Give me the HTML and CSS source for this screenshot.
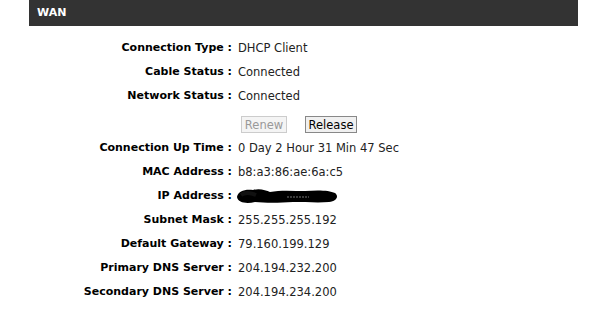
FILE: index.html
```html
<!DOCTYPE html>
<html lang="en">
<head>
    <meta charset="UTF-8">
    <title>WAN</title>
    <link rel="stylesheet" href="styles.css">
</head>
<body>
    <div class="panel">
        <div class="title">WAN</div>
        <div class="info">
            <div class="label">Connection Type :</div>
            <div class="value">DHCP Client</div>

            <div class="label">Cable Status :</div>
            <div class="value">Connected</div>

            <div class="label">Network Status :</div>
            <div class="value">Connected</div>

            <div class="label btn-row"></div>
            <div class="value buttons">
                <button type="button" class="renew" disabled>Renew</button>
                <button type="button" class="release">Release</button>
            </div>

            <div class="label">Connection Up Time :</div>
            <div class="value">0 Day 2 Hour 31 Min 47 Sec</div>

            <div class="label">MAC Address :</div>
            <div class="value">b8:a3:86:ae:6a:c5</div>

            <div class="label">IP Address :</div>
            <div class="value">
                <!-- scribbled out -->
                <svg class="scribble" width="104" height="16" viewBox="0 0 104 16">
                    <path d="M2 9 C3 3 10 1 18 2 C24 0 31 2 35 4 C45 2 58 3 70 3 C82 2 94 2 100 5 C104 8 102 13 94 14 C84 15 70 14 58 14 C44 15 30 15 20 14 C12 16 3 15 2 9 Z" fill="#000"/>
                    <path d="M6 7 C10 4 16 5 21 7" stroke="#111" stroke-width="4" fill="none"/>
                    <path d="M52 9 L74 9" stroke="#777" stroke-width="1" stroke-dasharray="2 1" fill="none"/>
                </svg>
            </div>

            <div class="label">Subnet Mask :</div>
            <div class="value">255.255.255.192</div>

            <div class="label">Default Gateway :</div>
            <div class="value">79.160.199.129</div>

            <div class="label">Primary DNS Server :</div>
            <div class="value">204.194.232.200</div>

            <div class="label">Secondary DNS Server :</div>
            <div class="value">204.194.234.200</div>
        </div>
    </div>
</body>
</html>
```

FILE: styles.css
```css
body {
    margin: 0;
    background-color: #fff;
    font-family: Tahoma, "DejaVu Sans", sans-serif;
    font-size: 11px;
}
.panel {
    margin-left: 29px;
    width: 549px;
}
.title {
    height: 26px;
    line-height: 26px;
    padding-left: 8px;
    background-color: #333333;
    color: #fff;
    font-weight: bold;
    font-size: 11px;
}
.info {
    display: grid;
    grid-template-columns: 203px auto;
    column-gap: 6px;
    margin-top: 13px;
}
.label {
    height: 24px;
    line-height: 18px;
    text-align: right;
    font-weight: bold;
    color: #000;
}
.value {
    height: 24px;
    line-height: 18px;
    font-size: 11.5px;
    color: #222;
}
.btn-row {
    height: 28px;
}
.buttons {
    display: flex;
    gap: 18px;
    padding-left: 3px;
    padding-top: 5px;
    height: 28px;
    box-sizing: border-box;
}
button {
    font-family: inherit;
    font-size: 11.5px;
    height: 17px;
    border: 1px solid #888;
    background-color: #f0f0f0;
    color: #000;
    line-height: 14px;
}
.renew {
    width: 46px;
    padding: 0;
}
.release {
    width: 52px;
    padding: 0;
}
button:disabled {
    border-color: #ccc;
    color: #999;
    background-color: #f4f4f4;
}
.scribble {
    display: block;
    margin-left: -3px;
    margin-top: 1px;
}
```
